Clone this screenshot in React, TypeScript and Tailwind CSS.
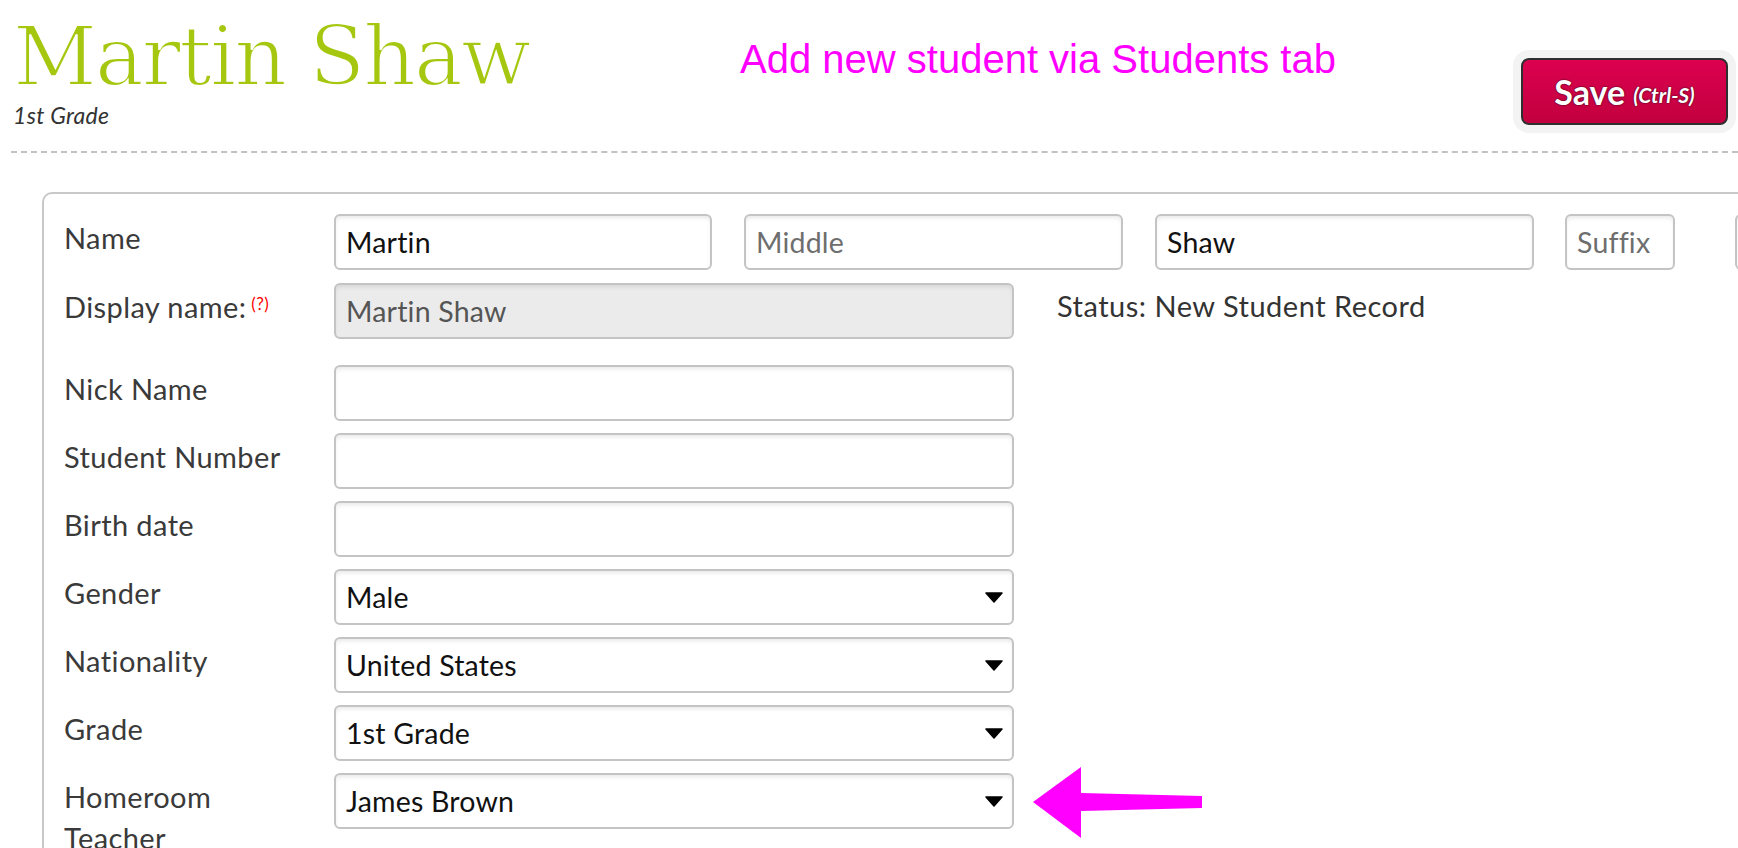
import React from "react";

const inputBase =
  "h-[56px] rounded-[6px] border-2 border-[#c4c4c4] shadow-[inset_0_3px_4px_-1px_rgba(0,0,0,0.09)] px-[10px] text-[28.5px] leading-[33px] tracking-[0.2px] flex items-center";

function Label({ children }: { children: React.ReactNode }) {
  return (
    <div className="w-[270px] shrink-0 pr-[30px] pt-[3px] text-[29px] leading-[41px] tracking-[0.4px] text-[#3a3a3a]">
      {children}
    </div>
  );
}

function TextBox({
  value,
  placeholder,
  w,
  className = "",
}: {
  value?: string;
  placeholder?: string;
  w: string;
  className?: string;
}) {
  return (
    <div className={`${inputBase} ${w} ${className} bg-white`}>
      {value ? (
        <span className="text-[#111]">{value}</span>
      ) : placeholder ? (
        <span className="text-[#6e6e6e]">{placeholder}</span>
      ) : null}
    </div>
  );
}

function SelectBox({ value }: { value: string }) {
  return (
    <div className={`${inputBase} w-[680px] bg-white justify-between pr-[9px]`}>
      <span className="text-[#111]">{value}</span>
      <svg width="18" height="11" viewBox="0 0 18 11">
        <polygon points="1,1 17,1 9,10" fill="#000" stroke="#000" strokeWidth="1.5" strokeLinejoin="round" />
      </svg>
    </div>
  );
}

export default function App() {
  return (
    <div className="relative w-[1738px] h-[848px] overflow-hidden bg-white font-['Lato','Open_Sans',sans-serif]">
      {/* Header */}
      <div className="flex items-start pl-[13px] pr-[2px] h-[151px]">
        <div className="w-[727px] shrink-0">
          <div className="pt-[16px] font-['DejaVu_Serif',serif] text-[82px] leading-[82px] text-[#a5c70f] tracking-[-2px] [-webkit-text-stroke:2px_white]">
            Martin Shaw
          </div>
          <div className="mt-[4px] text-[23px] leading-[26px] italic tracking-[0.3px] text-[#333]">1st Grade</div>
        </div>
        <div className="pt-[39px] font-['Liberation_Sans',Arial,sans-serif] text-[40px] leading-[40px] text-[#ff00ff]">
          Add new student via Students tab
        </div>
        <div className="ml-auto mt-[50px] p-[8px] rounded-[16px] bg-[#f3f3f3]">
          <div className="w-[207px] h-[67px] rounded-[8px] border-2 border-[#2f2f2f] bg-gradient-to-b from-[#dc004f] to-[#c2003f] flex items-center justify-center gap-[8px] text-white [text-shadow:0_0_2px_rgba(0,0,0,0.9)]">
            <span className="text-[34px] font-bold leading-none">Save</span>
            <span className="text-[21px] font-bold italic leading-none mt-[5px]">(Ctrl-S)</span>
          </div>
        </div>
      </div>

      {/* Dashed divider */}
      <div className="ml-[11px] border-t-2 border-dashed border-[#c2c2c2]" />

      {/* Form panel */}
      <div className="ml-[42px] mt-[39px] border-l-2 border-t-2 border-[#c8c8c8] rounded-tl-[10px] pl-[20px] pt-[20px] h-[700px]">
        {/* Name */}
        <div className="flex">
          <Label>Name</Label>
          <div className="flex">
            <TextBox value="Martin" w="w-[378px]" />
            <TextBox placeholder="Middle" w="w-[379px]" className="ml-[32px]" />
            <TextBox value="Shaw" w="w-[379px]" className="ml-[32px]" />
            <TextBox placeholder="Suffix" w="w-[110px]" className="ml-[31px]" />
            <TextBox w="w-[100px]" className="ml-[60px]" />
          </div>
        </div>

        {/* Display name */}
        <div className="flex mt-[13px]">
          <Label>
            Display name:
            <sup className="text-[17px] text-[#f00] ml-[5px] relative top-[-8px]">(?)</sup>
          </Label>
          <div className={`${inputBase} w-[680px] bg-[#ebebeb]`}>
            <span className="text-[#555]">Martin Shaw</span>
          </div>
          <div className="ml-[43px] pt-[2px] text-[29px] leading-[41px] tracking-[0.5px] text-[#333]">
            Status: New Student Record
          </div>
        </div>

        <div className="flex flex-col gap-[12px] mt-[26px]">
          <div className="flex">
            <Label>Nick Name</Label>
            <TextBox w="w-[680px]" />
          </div>
          <div className="flex">
            <Label>Student Number</Label>
            <TextBox w="w-[680px]" />
          </div>
          <div className="flex">
            <Label>Birth date</Label>
            <TextBox w="w-[680px]" />
          </div>
          <div className="flex">
            <Label>Gender</Label>
            <SelectBox value="Male" />
          </div>
          <div className="flex">
            <Label>Nationality</Label>
            <SelectBox value="United States" />
          </div>
          <div className="flex">
            <Label>Grade</Label>
            <SelectBox value="1st Grade" />
          </div>
          <div className="flex">
            <Label>Homeroom Teacher</Label>
            <SelectBox value="James Brown" />
          </div>
        </div>
      </div>

      {/* Magenta annotation arrow */}
      <svg className="absolute left-0 top-0 pointer-events-none" width="1738" height="848">
        <polygon
          points="1033,802 1081,767 1081,793 1202,796 1202,808 1081,811 1081,838"
          fill="#ff00ff"
        />
      </svg>
    </div>
  );
}
